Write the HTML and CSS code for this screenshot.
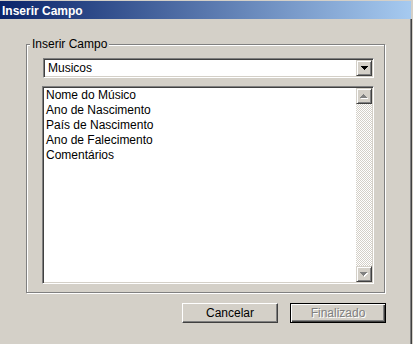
FILE: index.html
```html
<!DOCTYPE html>
<html lang="pt">
<head>
    <meta charset="UTF-8">
    <title>Inserir Campo</title>
    <link rel="stylesheet" href="styles.css">
</head>
<body>
    <div class="window">
        <div class="titlebar">Inserir Campo</div>
        <div class="content">
            <fieldset class="group">
                <legend>Inserir Campo</legend>
                <div class="combo">
                    <span class="combo-value">Musicos</span>
                    <span class="raised combo-btn">
                        <svg width="7" height="4" shape-rendering="crispEdges">
                            <rect x="0" y="0" width="7" height="1"/>
                            <rect x="1" y="1" width="5" height="1"/>
                            <rect x="2" y="2" width="3" height="1"/>
                            <rect x="3" y="3" width="1" height="1"/>
                        </svg>
                    </span>
                </div>
                <div class="listbox">
                    <ul class="items">
                        <li>Nome do Músico</li>
                        <li>Ano de Nascimento</li>
                        <li>País de Nascimento</li>
                        <li>Ano de Falecimento</li>
                        <li>Comentários</li>
                    </ul>
                    <div class="scrollbar">
                        <span class="raised sb-btn">
                            <svg width="8" height="5" shape-rendering="crispEdges">
                                <g fill="#fff" transform="translate(1,1)">
                                    <rect x="3" y="0" width="1" height="1"/>
                                    <rect x="2" y="1" width="3" height="1"/>
                                    <rect x="1" y="2" width="5" height="1"/>
                                    <rect x="0" y="3" width="7" height="1"/>
                                </g>
                                <g fill="#808080">
                                    <rect x="3" y="0" width="1" height="1"/>
                                    <rect x="2" y="1" width="3" height="1"/>
                                    <rect x="1" y="2" width="5" height="1"/>
                                    <rect x="0" y="3" width="7" height="1"/>
                                </g>
                            </svg>
                        </span>
                        <span class="sb-track"></span>
                        <span class="raised sb-btn">
                            <svg width="8" height="5" shape-rendering="crispEdges">
                                <g fill="#fff" transform="translate(1,1)">
                                    <rect x="0" y="0" width="7" height="1"/>
                                    <rect x="1" y="1" width="5" height="1"/>
                                    <rect x="2" y="2" width="3" height="1"/>
                                    <rect x="3" y="3" width="1" height="1"/>
                                </g>
                                <g fill="#808080">
                                    <rect x="0" y="0" width="7" height="1"/>
                                    <rect x="1" y="1" width="5" height="1"/>
                                    <rect x="2" y="2" width="3" height="1"/>
                                    <rect x="3" y="3" width="1" height="1"/>
                                </g>
                            </svg>
                        </span>
                    </div>
                </div>
            </fieldset>
            <div class="actions">
                <button class="btn">Cancelar</button>
                <button class="btn default" disabled>Finalizado</button>
            </div>
        </div>
    </div>
</body>
</html>
```

FILE: styles.css
```css
* {
    box-sizing: border-box;
}
body {
    margin: 0;
    background-color: #d4d0c8;
    font-family: 'Liberation Sans', Arial, sans-serif;
    font-size: 12px;
    color: #000;
}
.window {
    width: 413px;
    height: 344px;
    padding-top: 1px;
}
.titlebar {
    width: 411px;
    height: 18px;
    padding: 3px 0 0 2px;
    line-height: 15px;
    font-weight: bold;
    color: white;
    background: linear-gradient(to right, #0a246a, #a6caf0);
}
.content {
    width: 412px;
    height: 325px;
    padding: 18px 0 0 26px;
    border-right: 1px solid #404040;
    box-shadow: inset -1px 0 #808080;
}
.group {
    width: 359px;
    margin: 0;
    padding: 0 0 8px 0;
    min-width: 0;
    border: 1px solid #808080;
    box-shadow: 1px 1px 0 #fff, inset 1px 1px 0 #fff;
}
.group legend {
    margin-left: 3px;
    padding: 0 2px;
    line-height: 14px;
    background-color: #d4d0c8;
}
.raised {
    background-color: #d4d0c8;
    border: 1px solid;
    border-color: #d4d0c8 #404040 #404040 #d4d0c8;
    box-shadow: inset 1px 1px #fff, inset -1px -1px #808080;
    display: flex;
    align-items: center;
    justify-content: center;
}
.combo {
    display: flex;
    width: 331px;
    height: 20px;
    margin: 7px 0 0 16px;
    background-color: white;
    border: 1px solid;
    border-color: #808080 #fff #fff #808080;
    box-shadow: inset 1px 1px #404040, inset -1px -1px #d4d0c8;
    padding: 1px;
}
.combo-value {
    flex: 1;
    padding-left: 3px;
    line-height: 16px;
}
.combo-btn {
    width: 16px;
    height: 16px;
}
.listbox {
    display: flex;
    width: 332px;
    height: 198px;
    margin: 8px 0 0 15px;
    padding: 1px;
    background-color: white;
    border: 1px solid;
    border-color: #808080 #fff #fff #808080;
    box-shadow: inset 1px 1px #404040, inset -1px -1px #d4d0c8;
}
.items {
    flex: 1;
    list-style: none;
    margin: 0;
    padding: 0 0 0 2px;
}
.items li {
    height: 15px;
    line-height: 14px;
}
.scrollbar {
    display: flex;
    flex-direction: column;
    width: 16px;
}
.sb-btn {
    height: 16px;
}
.sb-track {
    flex: 1;
    background-image: repeating-conic-gradient(#fff 0 25%, #d4d0c8 0 50%);
    background-size: 2px 2px;
}
.actions {
    display: flex;
    justify-content: flex-end;
    gap: 12px;
    width: 360px;
    margin-top: 10px;
}
.btn {
    width: 96px;
    height: 20px;
    padding: 0;
    font-family: inherit;
    font-size: 12px;
    color: #000;
    background-color: #d4d0c8;
    border: 1px solid;
    border-color: #fff #404040 #404040 #fff;
    box-shadow: inset -1px -1px #808080;
}
.btn.default {
    border-color: #000;
    box-shadow: inset 1px 1px #fff, inset -1px -1px #404040, inset -2px -2px #808080;
    color: #808080;
    text-shadow: 1px 1px #fff;
}
```
